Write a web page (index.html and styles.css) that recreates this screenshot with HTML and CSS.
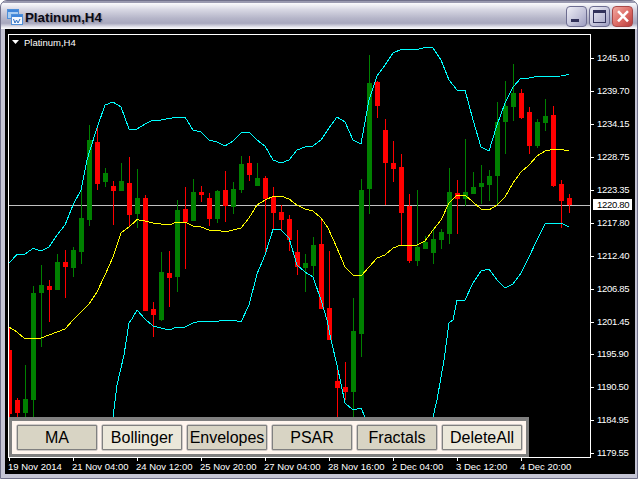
FILE: index.html
```html
<!DOCTYPE html>
<html lang="en">
<head>
<meta charset="utf-8">
<title>Platinum,H4</title>
<link rel="stylesheet" href="styles.css">
</head>
<body>
<div class="window">
  <header class="titlebar">
    <svg class="app-icon" viewBox="0 0 16 16" width="16" height="16">
      <rect x="0.5" y="0.5" width="11" height="9" fill="#a9cdf2" stroke="#4f8fd8"/>
      <rect x="1" y="1" width="10" height="2" fill="#3f86dc"/>
      <rect x="4.5" y="5.5" width="11" height="10" fill="#f4f8fe" stroke="#4f8fd8"/>
      <rect x="5" y="6" width="10" height="2" fill="#3f86dc"/>
      <path d="M6.5 10l1.5 4 1.5-3 1.5 3 2-4" fill="none" stroke="#2f6fc0"/>
    </svg>
    <span class="title">Platinum,H4</span>
    <div class="controls">
      <div class="ctl"><span class="glyph-min"></span></div>
      <div class="ctl"><span class="glyph-max"></span></div>
      <div class="ctl ctl-close">
        <svg viewBox="0 0 20 21" width="18" height="19"><path d="M4.5 4.5l11 11.500M15.500 4.500l-11 11.500" stroke="#fff" stroke-width="2.800" fill="none"/></svg>
      </div>
    </div>
  </header>
  <main class="client">
    <svg class="chart" viewBox="5 29 630 445" width="630" height="445">
      <g shape-rendering="crispEdges">
        <path class="frame" d="M8.500 34.500H590.500V457.500H8.500Z"/>
        <path class="frame" d="M591 58.500h3M591 91.500h3M591 124.500h3M591 157.500h3M591 190.500h3M591 223.500h3M591 256.500h3M591 289.500h3M591 322.500h3M591 354.500h3M591 387.500h3M591 420.500h3M591 453.500h3"/>
        <path class="frame" d="M9.500 458v3M73.500 458v3M137.500 458v3M201.500 458v3M265.500 458v3M329.500 458v3M393.500 458v3M457.500 458v3M521.500 458v3"/>
        <path class="price-line" d="M9 205.500H590"/>
        <path class="wick-g" d="M25.500 365V417M33.500 286V417M41.500 265V347M57.500 254V290M73.500 247V277M81.500 190V264M89.500 125V226M105.500 168V187M121.500 163V191M137.500 169V228M161.500 252V321M177.500 200V292M193.500 179V221M217.500 190V223M233.500 182V214M241.500 156V193M257.500 163V186M305.500 254V292M313.500 237V276M353.500 298V417M361.500 179V357M369.500 55V214M417.500 190V266M425.500 236V249M433.500 228V264M441.500 229V249M449.500 168V244M465.500 139V206M473.500 172V194M481.500 165V204M489.500 170V201M497.500 102V204M505.500 81V154M513.500 64V121M537.500 119V148M545.500 99V131"/>
        <path class="wick-r" d="M9.500 327V417M17.500 398V417M49.500 280V322M65.500 250V298M97.500 128V190M113.500 181V225M129.500 157V226M145.500 195V311M153.500 302V337M169.500 251V307M185.500 187V269M201.500 186V202M209.500 193V226M225.500 171V222M249.500 156V181M265.500 176V254M273.500 187V230M281.500 205V230M289.500 215V251M297.500 230V275M321.500 218V309M329.500 251V340M337.500 365V417M345.500 362V400M377.500 81V118M385.500 119V205M393.500 141V182M401.500 154V245M409.500 194V263M457.500 180V234M521.500 89V119M529.500 107V154M553.500 106V187M561.500 180V228M569.500 194V213"/>
        <path class="body-g" d="M23 399h5V413h-5zM31 293h5V400h-5zM39 285h5V293h-5zM55 262h5V290h-5zM71 250h5V268h-5zM79 218h5V252h-5zM87 140h5V220h-5zM103 173h5V182h-5zM119 181h5V191h-5zM135 198h5V214h-5zM159 272h5V320h-5zM175 210h5V277h-5zM191 192h5V221h-5zM215 191h5V219h-5zM231 189h5V207h-5zM239 164h5V190h-5zM255 178h5V186h-5zM303 263h5V268h-5zM311 245h5V266h-5zM351 331h5V392h-5zM359 190h5V334h-5zM367 83h5V189h-5zM415 247h5V261h-5zM423 242h5V249h-5zM431 239h5V253h-5zM439 232h5V240h-5zM447 192h5V234h-5zM463 192h5V199h-5zM471 187h5V194h-5zM479 183h5V187h-5zM487 176h5V185h-5zM495 122h5V176h-5zM503 106h5V122h-5zM511 93h5V107h-5zM535 122h5V146h-5zM543 116h5V123h-5z"/>
        <path class="body-r" d="M9 350h3V414h-3zM15 400h5V413h-5zM47 286h5V290h-5zM63 262h5V267h-5zM95 142h5V184h-5zM111 186h5V191h-5zM127 183h5V215h-5zM143 198h5V311h-5zM151 309h5V315h-5zM167 273h5V278h-5zM183 209h5V222h-5zM199 192h5V195h-5zM207 198h5V219h-5zM223 190h5V206h-5zM247 163h5V175h-5zM263 178h5V199h-5zM271 197h5V213h-5zM279 212h5V220h-5zM287 219h5V240h-5zM295 252h5V267h-5zM319 244h5V309h-5zM327 308h5V340h-5zM335 381h5V388h-5zM343 387h5V392h-5zM375 82h5V106h-5zM383 130h5V163h-5zM391 163h5V169h-5zM399 167h5V213h-5zM407 206h5V261h-5zM455 193h5V199h-5zM519 93h5V118h-5zM527 112h5V146h-5zM551 115h5V186h-5zM559 184h5V201h-5zM567 198h5V205h-5z"/>
      </g>
      <polyline class="band" points="9,263 17,254.500 25,254 33,248.500 41,251 49,247 57,235 65,225 73,205 81,190 87,160 90,150 97,128 105,105 113,102 121,107 129,129 137,129 145,124 153,120 161,120 169,118.500 177,117 185,117 193,130 201,132 209,140 217,142 225,146 233,141 241,133 249,132 257,140 265,146 273,160 281,163 289,160 297,150 305,147 313,146 321,140 329,128 337,117 345,122 353,140 361,144 369,100 377,76 385,65 393,53 401,49.500 409,49 419,49 425,47.500 433,48 441,60 449,80 457,90 465,90 473,120 481,147 489,151 497,125 505,103 513,87 521,78 529,78 537,76.500 561,76 569,74.500"/>
      <polyline class="ma" points="9,327 17,332 25,339 33,338 41,338 49,335 57,332 65,329 73,320 81,312 89,304 97,292 105,275 113,257 121,233 129,227 137,219.700 145,221 153,223 161,224 169,225 177,222 185,222 193,226 201,227 209,230 217,230 225,232 233,230 241,228 249,218 257,205 265,200 273,196.500 281,196 289,199 297,205 305,209 313,211 321,218 328,228 337,248 345,267 353,275 361,276 369,267 377,258 385,255 393,248 401,245 417,245 425,241 433,230 441,220 449,203 457,195 465,195 473,202 481,209 489,210 497,205 505,197 513,183 521,172 529,165 537,156 545,151 553,149.500 561,149.500 569,151"/>
      <polyline class="band" points="113,417 117,385 124,355 129,323 132,319 137,310 145,319 153,326 161,328 169,330 177,327 185,327 193,323 201,321 209,321 219,321 233,320 241,322 249,305 257,274 265,255 273,229.300 281,230 289,238 297,265 305,272 313,277 321,300 327,320 331,340 337,365 345,403 353,410 361,408 365,417"/>
      <polyline class="band" points="433,417 437,400 444,360 449,323 453,320 457,300 465,300 473,283 481,271 489,269 497,280 505,288 513,284 521,273 529,257 537,240 545,224 561,223 569,227"/>
      <path class="tri" d="M12 40h7l-3.500 4z"/>
      <text class="label" x="24" y="46">Platinum,H4</text>
      <g class="label prices">
        <text x="597" y="61">1245.10</text>
        <text x="597" y="94">1239.70</text>
        <text x="597" y="127">1234.15</text>
        <text x="597" y="160">1228.75</text>
        <text x="597" y="193">1223.35</text>
        <text x="597" y="226">1217.80</text>
        <text x="597" y="259">1212.40</text>
        <text x="597" y="292">1206.85</text>
        <text x="597" y="325">1201.45</text>
        <text x="597" y="357">1195.90</text>
        <text x="597" y="390">1190.50</text>
        <text x="597" y="423">1184.95</text>
        <text x="597" y="456">1179.55</text>
      </g>
      <g class="label">
        <text x="8" y="470">19 Nov 2014</text>
        <text x="72" y="470">21 Nov 04:00</text>
        <text x="136" y="470">24 Nov 12:00</text>
        <text x="200" y="470">25 Nov 20:00</text>
        <text x="264" y="470">27 Nov 04:00</text>
        <text x="328" y="470">28 Nov 16:00</text>
        <text x="392" y="470">2 Dec 04:00</text>
        <text x="456" y="470">3 Dec 12:00</text>
        <text x="520" y="470">4 Dec 20:00</text>
      </g>
      <rect class="price-box" x="593" y="199" width="39" height="11" shape-rendering="crispEdges"/>
      <text class="label prices price-text" x="597" y="208">1220.80</text>
    </svg>
    <div class="panel">
      <div class="btn">MA</div>
      <div class="btn btn-light">Bollinger</div>
      <div class="btn">Envelopes</div>
      <div class="btn">PSAR</div>
      <div class="btn">Fractals</div>
      <div class="btn btn-light">DeleteAll</div>
    </div>
  </main>
</div>
</body>
</html>
```
FILE: styles.css
```css
* { box-sizing: border-box; }
html, body { margin: 0; padding: 0; background: #fff; }
.window {
  width: 638px;
  height: 479px;
  display: flex;
  flex-direction: column;
  border: 1px solid #70708a;
  border-radius: 7px 7px 0 0;
  background: #c4c4d4;
  overflow: hidden;
}
.titlebar {
  height: 28px;
  flex: none;
  display: flex;
  align-items: center;
  padding: 0 4px 0 6px;
  border-top: 2px solid #9a9ab0;
  background: linear-gradient(#fbfbfd 0, #d8d8e4 25%, #b4b4c8 60%, #a8a8be 78%, #e4e4ec 92%, #fff 100%);
}
.app-icon { flex: none; margin-top: 2px; }
.title {
  margin-left: 2px;
  margin-top: 2px;
  font: bold 13.300px "Liberation Sans", sans-serif;
  color: #0a0a14;
  text-shadow: 1px 1px 1px #8c8ca0;
}
.controls { margin-left: auto; display: flex; gap: 2px; }
.ctl {
  position: relative;
  width: 21px;
  height: 21px;
  border: 1px solid #6c6c90;
  border-radius: 4px;
  background: linear-gradient(135deg, #eeeef6, #c4c4da 55%, #9c9cc0);
  display: flex;
  align-items: center;
  justify-content: center;
}
.ctl-close {
  border-color: #a84848;
  background: linear-gradient(135deg, #f0a8a0, #dc6a64 55%, #b83c3c);
}
.glyph-min { width: 8px; height: 3px; background: #32325a; margin-top: 9px; margin-right: 3px; }
.glyph-max { width: 13px; height: 13px; border: 1px solid #32325a; border-top-width: 3px; }
.client {
  position: relative;
  flex: 1;
  margin: 0 2px 4px 4px;
  background: #000;
}
.chart { display: block; }
.frame { fill: none; stroke: #fff; stroke-width: 1; }
.price-line { stroke: #c0c0c0; stroke-width: 1; fill: none; }
.wick-g { stroke: #008000; stroke-width: 1; fill: none; }
.wick-r { stroke: #ff0000; stroke-width: 1; fill: none; }
.body-g { fill: #008000; }
.body-r { fill: #ff0000; }
.band { fill: none; stroke: #00ffff; stroke-width: 1; shape-rendering: crispEdges; }
.ma { fill: none; stroke: #ffff00; stroke-width: 1; shape-rendering: crispEdges; }
.tri { fill: #fff; }
.label { font: 9.500px "Liberation Sans", sans-serif; fill: #fff; }
.prices { letter-spacing: -0.300px; }
.price-box { fill: #fff; }
.price-text { fill: #000; }
.panel {
  position: absolute;
  left: 4px;
  top: 388px;
  width: 520px;
  height: 40px;
  display: flex;
  gap: 5px;
  padding: 4px 4px 4px 5px;
  background: #fff5ee;
  border: 3px solid #808080;
  border-top-width: 4px;
}
.btn {
  width: 80px;
  height: 25px;
  display: flex;
  align-items: center;
  justify-content: center;
  background: #d8d4c4;
  border: 1px solid #808080;
  border-radius: 1px;
  box-shadow: 0 0 0 0.500px #a0a0a0;
  font: 16px "Liberation Sans", sans-serif;
  color: #000;
  white-space: nowrap;
}
.btn-light { background: #ebe8da; }
```
